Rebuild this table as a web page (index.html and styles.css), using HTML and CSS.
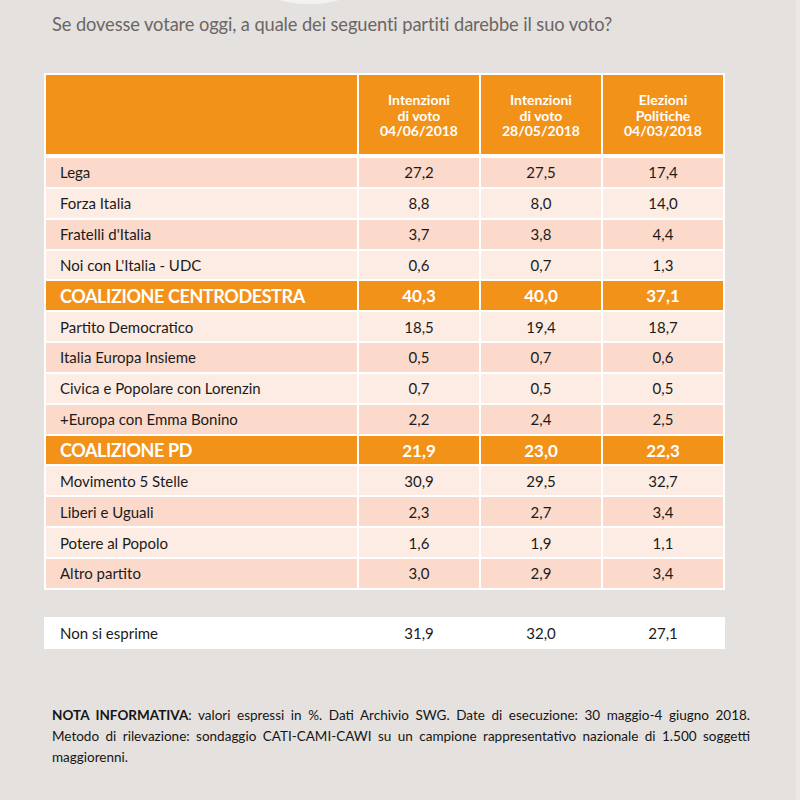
FILE: index.html
```html
<!DOCTYPE html>
<html lang="it">
<head>
<meta charset="utf-8">
<link rel="stylesheet" href="styles.css">
</head>
<body>
<div class="page">
  <div class="arc"></div>
  <div class="edge"></div>
  <h1 class="title">Se dovesse votare oggi, a quale dei seguenti partiti darebbe il suo voto?</h1>

  <div class="table">
    <div class="hcell"></div>
    <div class="hcell hcol">Intenzioni<br>di voto<br>04/06/2018</div>
    <div class="hcell hcol">Intenzioni<br>di voto<br>28/05/2018</div>
    <div class="hcell hcol">Elezioni<br>Politiche<br>04/03/2018</div>

    <div class="c lab d">Lega</div><div class="c num d">27,2</div><div class="c num d">27,5</div><div class="c num d">17,4</div>
    <div class="c lab l">Forza Italia</div><div class="c num l">8,8</div><div class="c num l">8,0</div><div class="c num l">14,0</div>
    <div class="c lab d">Fratelli d'Italia</div><div class="c num d">3,7</div><div class="c num d">3,8</div><div class="c num d">4,4</div>
    <div class="c lab l">Noi con L'Italia - UDC</div><div class="c num l">0,6</div><div class="c num l">0,7</div><div class="c num l">1,3</div>
    <div class="c lab o">COALIZIONE CENTRODESTRA</div><div class="c num o">40,3</div><div class="c num o">40,0</div><div class="c num o">37,1</div>
    <div class="c lab l">Partito Democratico</div><div class="c num l">18,5</div><div class="c num l">19,4</div><div class="c num l">18,7</div>
    <div class="c lab d">Italia Europa Insieme</div><div class="c num d">0,5</div><div class="c num d">0,7</div><div class="c num d">0,6</div>
    <div class="c lab l">Civica e Popolare con Lorenzin</div><div class="c num l">0,7</div><div class="c num l">0,5</div><div class="c num l">0,5</div>
    <div class="c lab d">+Europa con Emma Bonino</div><div class="c num d">2,2</div><div class="c num d">2,4</div><div class="c num d">2,5</div>
    <div class="c lab o">COALIZIONE PD</div><div class="c num o">21,9</div><div class="c num o">23,0</div><div class="c num o">22,3</div>
    <div class="c lab l">Movimento 5 Stelle</div><div class="c num l">30,9</div><div class="c num l">29,5</div><div class="c num l">32,7</div>
    <div class="c lab d">Liberi e Uguali</div><div class="c num d">2,3</div><div class="c num d">2,7</div><div class="c num d">3,4</div>
    <div class="c lab l">Potere al Popolo</div><div class="c num l">1,6</div><div class="c num l">1,9</div><div class="c num l">1,1</div>
    <div class="c lab d">Altro partito</div><div class="c num d">3,0</div><div class="c num d">2,9</div><div class="c num d">3,4</div>
  </div>

  <div class="extra">
    <div class="c lab">Non si esprime</div><div class="c num">31,9</div><div class="c num">32,0</div><div class="c num">27,1</div>
  </div>

  <p class="note"><b>NOTA INFORMATIVA</b>: valori espressi in %. Dati Archivio SWG. Date di esecuzione: 30 maggio-4 giugno 2018. Metodo di rilevazione: sondaggio CATI-CAMI-CAWI su un campione rappresentativo nazionale di 1.500 soggetti maggiorenni.</p>
</div>
</body>
</html>
```

FILE: styles.css
```css
* { box-sizing: border-box; }
html, body { margin: 0; padding: 0; }
body {
  background: #e5e1de;
  font-family: "Lato", "Open Sans", sans-serif;
  color: #1b1b1b;
}
.page {
  position: relative;
  width: 800px;
  height: 800px;
  padding: 12px 0 0 44px;
  overflow: hidden;
}
.arc {
  position: absolute;
  left: 262px;
  top: -30px;
  width: 94px;
  height: 34px;
  border-radius: 50%;
  background: #f4f2f0;
}
.edge {
  position: absolute;
  right: 0;
  top: 0;
  width: 4px;
  height: 800px;
  background: #ebe8e6;
}
.title {
  margin: 0 0 0 8px;
  font-size: 18.3px;
  font-weight: 400;
  color: #6b6664;
  line-height: 24px;
  letter-spacing: -0.1px;
}
.table {
  margin-top: 37px;
  width: 681px;
  display: grid;
  grid-template-columns: 311px 120px 120px 120px;
  grid-template-rows: 81px repeat(14, 28.85px);
  column-gap: 2px;
  row-gap: 2px;
  background: #ffffff;
  padding: 2px;
}
.hcell {
  background: #f39219;
  margin-bottom: 2px;
}
.hcol {
  color: #ffffff;
  font-weight: 700;
  font-size: 14px;
  line-height: 15.5px;
  text-align: center;
  display: flex;
  align-items: center;
  justify-content: center;
  padding-top: 2px;
}
.c {
  display: flex;
  align-items: center;
  font-size: 15px;
}
.lab { padding-left: 14px; }
.num { justify-content: center; }
.d { background: #fbdacb; }
.l { background: #fdece3; }
.o {
  background: #f39219;
  color: #ffffff;
  font-weight: 700;
}
.lab.o { font-size: 18px; letter-spacing: -0.4px; }
.num.o { font-size: 17px; }
.extra {
  margin-top: 27px;
  width: 681px;
  padding: 0 2px;
  display: grid;
  grid-template-columns: 311px 120px 120px 120px;
  column-gap: 2px;
  height: 32px;
  background: #ffffff;
}
.note {
  margin: 56px 0 0 8px;
  width: 698px;
  font-size: 13.5px;
  line-height: 21px;
  text-align: justify;
  color: #151515;
}
```
